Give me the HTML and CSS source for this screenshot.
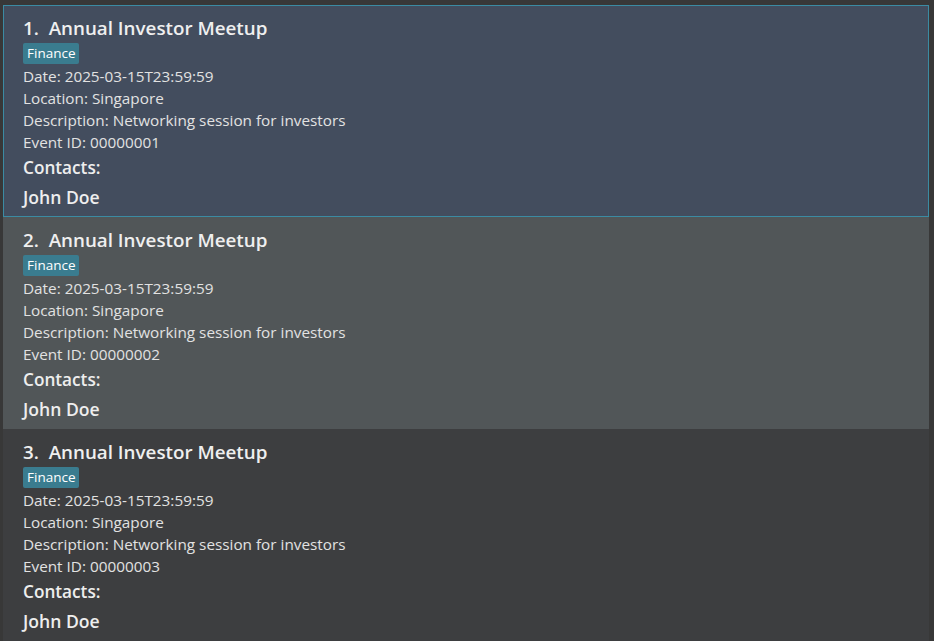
FILE: index.html
```html
<!DOCTYPE html>
<html>
<head>
<meta charset="utf-8">
<link rel="stylesheet" href="styles.css">
</head>
<body>
<div class="list">
  <div class="card selected">
    <div class="title">1.&nbsp; Annual Investor Meetup</div>
    <div class="tags"><span class="tag">Finance</span></div>
    <div class="line">Date: 2025-03-15T23:59:59</div>
    <div class="line">Location: Singapore</div>
    <div class="line">Description: Networking session for investors</div>
    <div class="line">Event ID: 00000001</div>
    <div class="head">Contacts:</div>
    <div class="contact">John Doe</div>
  </div>
  <div class="card alt">
    <div class="title">2.&nbsp; Annual Investor Meetup</div>
    <div class="tags"><span class="tag">Finance</span></div>
    <div class="line">Date: 2025-03-15T23:59:59</div>
    <div class="line">Location: Singapore</div>
    <div class="line">Description: Networking session for investors</div>
    <div class="line">Event ID: 00000002</div>
    <div class="head">Contacts:</div>
    <div class="contact">John Doe</div>
  </div>
  <div class="card">
    <div class="title">3.&nbsp; Annual Investor Meetup</div>
    <div class="tags"><span class="tag">Finance</span></div>
    <div class="line">Date: 2025-03-15T23:59:59</div>
    <div class="line">Location: Singapore</div>
    <div class="line">Description: Networking session for investors</div>
    <div class="line">Event ID: 00000003</div>
    <div class="head">Contacts:</div>
    <div class="contact">John Doe</div>
  </div>
</div>
</body>
</html>
```
FILE: styles.css
```css
html, body {
  margin: 0;
  padding: 0;
  height: 100%;
  overflow: hidden;
}
body {
  background: #383838;
  font-family: "Open Sans", "Noto Sans", sans-serif;
  color: #e2e2e2;
}
.list {
  display: flex;
  flex-direction: column;
  padding: 5px 5px 0 3px;
}
.card {
  height: 212px;
  box-sizing: border-box;
  border: 1px solid transparent;
  padding: 7px 19px 0 19px;
  background: #3d3e40;
}
.card.selected {
  background: #434d5e;
  border-color: #3b8ba3;
}
.card.alt {
  background: #515658;
}
.title {
  height: 30px;
  line-height: 30px;
  font-size: 18.8px;
  font-weight: 600;
  color: #efefef;
}
.tags {
  display: flex;
  height: 21px;
  margin-bottom: 1px;
}
.tag {
  background: #3a7c8f;
  color: #ffffff;
  font-size: 13.5px;
  line-height: 21px;
  padding: 0 4px;
  border-radius: 2px;
}
.line {
  height: 22px;
  line-height: 22px;
  font-size: 15.3px;
}
.head {
  margin-top: 2px;
  height: 26px;
  line-height: 26px;
  font-size: 17.2px;
  font-weight: 600;
  color: #eeeeee;
}
.contact {
  margin-top: 3px;
  height: 26px;
  line-height: 26px;
  font-size: 17.6px;
  font-weight: 600;
  color: #eeeeee;
}
```
